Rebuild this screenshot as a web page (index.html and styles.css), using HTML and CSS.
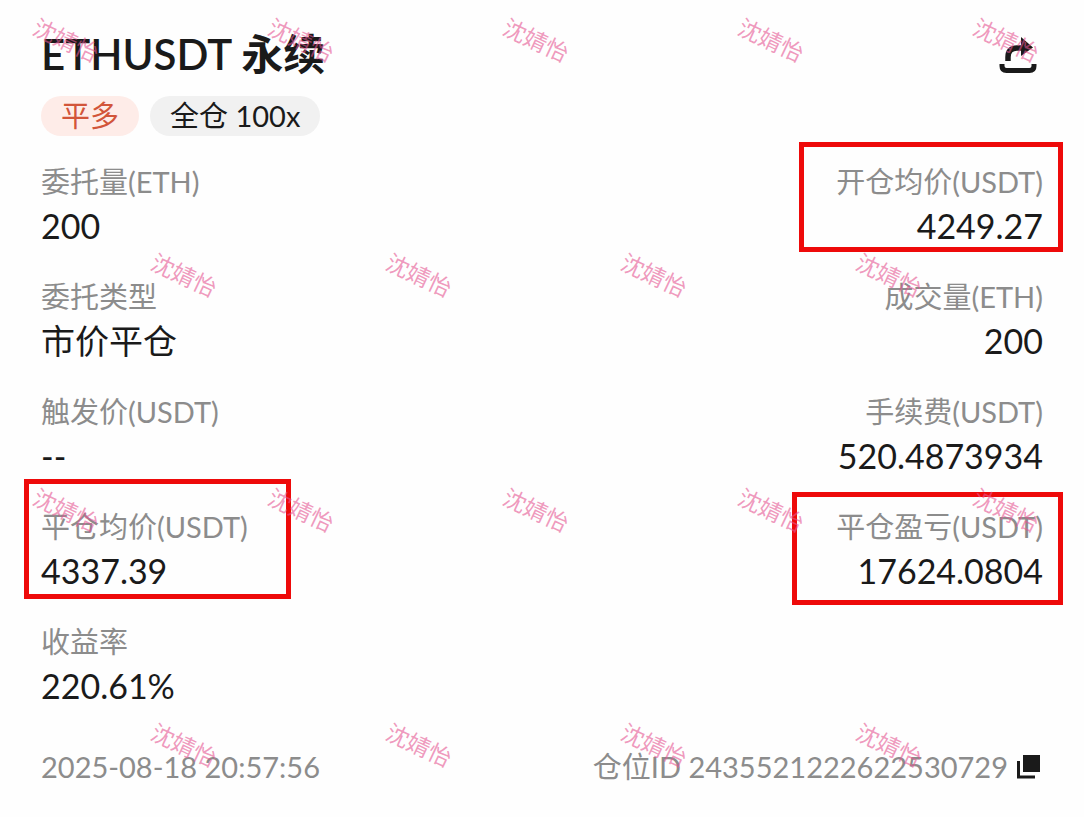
FILE: index.html
```html
<!DOCTYPE html>
<html lang="zh-CN">

<head>
  <meta charset="UTF-8" />
  <meta name="viewport" content="width=device-width, initial-scale=1.0" />
  <title>ETHUSDT 永续</title>
  <link rel="stylesheet" href="styles.css">
</head>

<body>
  <main class="order">
    <header class="order_header">
      <h1>ETHUSDT 永续</h1>
      <button type="button" class="icon_btn" aria-label="分享">
        <svg width="38" height="38" viewBox="0 0 38 38">
          <path d="M9 24V20Q9 11 18 11H23" fill="none" stroke="#1a1a1a" stroke-width="5.500" />
          <path d="M22 0L34 10.500L22 19Z" fill="#1a1a1a" />
          <path d="M3 27V29Q3 33.500 7.500 33.500H30.500Q35 33.500 35 29V27" fill="none" stroke="#1a1a1a" stroke-width="5" />
        </svg>
      </button>
    </header>

    <div class="tags">
      <span class="tag tag_close">平多</span>
      <span class="tag">全仓 100x</span>
    </div>

    <dl class="fields">
      <div class="field">
        <dt>委托量(ETH)</dt>
        <dd>200</dd>
      </div>
      <div class="field right marked mark_open">
        <dt>开仓均价(USDT)</dt>
        <dd>4249.27</dd>
      </div>
      <div class="field">
        <dt>委托类型</dt>
        <dd>市价平仓</dd>
      </div>
      <div class="field right">
        <dt>成交量(ETH)</dt>
        <dd>200</dd>
      </div>
      <div class="field">
        <dt>触发价(USDT)</dt>
        <dd>--</dd>
      </div>
      <div class="field right">
        <dt>手续费(USDT)</dt>
        <dd>520.4873934</dd>
      </div>
      <div class="field marked mark_close">
        <dt>平仓均价(USDT)</dt>
        <dd>4337.39</dd>
      </div>
      <div class="field right marked mark_profit">
        <dt>平仓盈亏(USDT)</dt>
        <dd>17624.0804</dd>
      </div>
      <div class="field">
        <dt>收益率</dt>
        <dd>220.61%</dd>
      </div>
    </dl>

    <footer class="order_footer">
      <time datetime="2025-08-18T20:57:56">2025-08-18 20:57:56</time>
      <div class="position_id">
        <span>仓位ID 2435521222622530729</span>
        <button type="button" class="icon_btn" aria-label="复制">
          <svg width="24" height="24" viewBox="0 0 24 24">
            <path d="M6 0H23V17H6Z" fill="#1a1a1a" />
            <path d="M1.500 6V22H18" fill="none" stroke="#1a1a1a" stroke-width="3" />
          </svg>
        </button>
      </div>
    </footer>
  </main>

  <!-- Watermark layer -->
  <div class="watermark" aria-hidden="true">
    <div class="wm_row"><span>沈婧怡</span><span>沈婧怡</span><span>沈婧怡</span><span>沈婧怡</span><span>沈婧怡</span></div>
    <div class="wm_row shifted"><span>沈婧怡</span><span>沈婧怡</span><span>沈婧怡</span><span>沈婧怡</span></div>
    <div class="wm_row"><span>沈婧怡</span><span>沈婧怡</span><span>沈婧怡</span><span>沈婧怡</span><span>沈婧怡</span></div>
    <div class="wm_row shifted"><span>沈婧怡</span><span>沈婧怡</span><span>沈婧怡</span><span>沈婧怡</span></div>
  </div>
</body>

</html>
```
FILE: styles.css
```css
*,
*::after {
  box-sizing: border-box;
}

body {
  position: relative;
  margin: 0;
  background: #fefefe;
  color: #1a1a1a;
  font-family: Lato, 'Noto Sans CJK SC', sans-serif;
}

.order {
  padding: 24px 41px 28px;
}

.order_header {
  display: flex;
  justify-content: space-between;
  align-items: flex-end;
}

h1 {
  margin: 0;
  font-size: 42px;
  font-weight: 600;
  line-height: 60px;
}

.icon_btn {
  display: flex;
  padding: 0;
  border: 0;
  background: transparent;
  cursor: pointer;
}

.order_header .icon_btn {
  margin: 0 6px 9px 0;
}

.tags {
  display: flex;
  gap: 11px;
  margin-top: 12px;
}

.tag {
  padding: 0 20px;
  border-radius: 20px;
  background: #f1f1f1;
  font-size: 29px;
  line-height: 40px;
}

.tag_close {
  background: #feece8;
  color: #d2553a;
}

.fields {
  display: grid;
  grid-template-columns: 1fr 1fr;
  row-gap: 27px;
  margin: 26px 0 0;
}

.field dt {
  color: #8c8c8c;
  font-size: 29px;
  line-height: 40px;
}

.field dd {
  margin: 0;
  font-size: 34px;
  line-height: 48px;
}

.right {
  text-align: right;
}

/* Red frames round the key figures */
.marked {
  position: relative;
}

.marked::after {
  content: '';
  position: absolute;
  border: 5px solid #ee0a0a;
}

.mark_open::after {
  width: 264px;
  top: -20px;
  right: -20px;
  bottom: -2px;
}

.mark_close::after {
  width: 267px;
  top: -28px;
  left: -17px;
  bottom: -4px;
}

.mark_profit::after {
  width: 271px;
  top: -15px;
  right: -20px;
  bottom: -10px;
}

.order_footer {
  display: flex;
  justify-content: space-between;
  margin-top: 37px;
  color: #8c8c8c;
  font-size: 29px;
  line-height: 40px;
}

.position_id {
  display: flex;
  align-items: center;
  gap: 9px;
  padding-right: 2px;
}

.watermark {
  position: absolute;
  inset: 0;
  overflow: hidden;
  pointer-events: none;
  color: rgba(229, 86, 146, 0.6);
  font-family: 'Noto Sans CJK SC', sans-serif;
  font-size: 23px;
  line-height: 30px;
}

.wm_row {
  display: flex;
  gap: 166px;
  height: 235px;
  padding: 24px 0 0 32px;
}

.wm_row.shifted {
  padding-left: 150px;
}

.wm_row span {
  flex: none;
  width: 69px;
  height: 30px;
  transform: rotate(25deg);
}
```
